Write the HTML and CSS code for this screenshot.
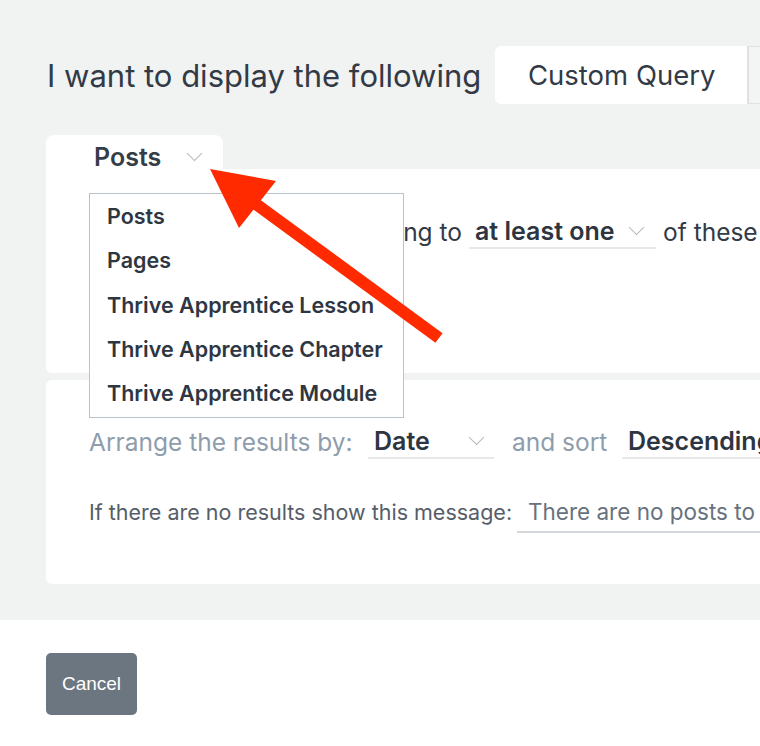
FILE: index.html
```html
<!DOCTYPE html>
<html lang="en">
<head>
  <meta charset="UTF-8">
  <title>Post List Settings</title>
  <link rel="stylesheet" href="styles.css">
</head>
<body>

  <div class="stage">
    <div class="head">
      <span class="head-title">I want to display the following</span>
      <div class="segmented">
        <span class="seg active">Custom Query</span>
        <span class="seg">Related Posts</span>
      </div>
    </div>

    <div class="tab">
      <span class="tab-label">Posts</span>
      <span class="chev"></span>
    </div>

    <div class="panel panel-query">
      <div class="row">
        <span class="txt lead">Show only the posts belonging to</span>
        <span class="select select-wide"><b>at least one</b><span class="chev"></span></span>
        <span class="txt">of these</span>
      </div>

      <ul class="dropdown">
        <li>Posts</li>
        <li>Pages</li>
        <li>Thrive Apprentice Lesson</li>
        <li>Thrive Apprentice Chapter</li>
        <li>Thrive Apprentice Module</li>
      </ul>
    </div>

    <div class="panel panel-order">
      <div class="row">
        <span class="txt muted arrange-label">Arrange the results by:</span>
        <span class="select select-date"><b>Date</b><span class="chev"></span></span>
        <span class="txt muted sort-label">and sort</span>
        <span class="select select-sort"><b>Descending</b></span>
      </div>
      <div class="row row-msg">
        <span class="msg-label">If there are no results show this message:</span>
        <span class="msg-input">There are no posts to display</span>
      </div>
    </div>
  </div>

  <div class="footer">
    <button class="btn-cancel">Cancel</button>
  </div>

  <svg class="pointer" width="760" height="746" viewBox="0 0 760 746">
    <line x1="439" y1="338" x2="245" y2="196" stroke="#ff2a00" stroke-width="12"/>
    <polygon points="210,169 276,181 239,228" fill="#ff2a00"/>
  </svg>

</body>
</html>
```

FILE: styles.css
```css
* {
  margin: 0;
  padding: 0;
  box-sizing: border-box;
}
body {
  font-family: Inter, "Open Sans", sans-serif;
  background-color: #fff;
  color: #323a45;
  width: 760px;
  height: 746px;
  overflow: hidden;
  position: relative;
}
.stage {
  background-color: #f1f2f2;
  height: 620px;
  padding: 46px 0 0 46px;
}
.head {
  display: flex;
  align-items: center;
  height: 58px;
}
.head-title {
  flex-shrink: 0;
  font-size: 31px;
  width: 449px;
  padding-left: 1px;
  white-space: nowrap;
}
.segmented {
  display: flex;
  flex-shrink: 0;
  height: 58px;
}
.seg {
  display: flex;
  align-items: center;
  padding: 0 40px;
  font-size: 27.5px;
  white-space: nowrap;
  background-color: #f3f4f4;
  border: 1px solid #dfe2e4;
  border-left: 2px solid #dfe2e4;
}
.seg.active {
  width: 252px;
  padding: 0 0 0 33px;
  background-color: #fff;
  border: none;
  border-radius: 6px 0 0 6px;
}
.tab {
  margin-top: 31px;
  width: 177px;
  height: 34px;
  background-color: #fff;
  border-radius: 8px 8px 0 0;
  display: flex;
  align-items: center;
  padding: 10px 0 0 48px;
}
.tab-label {
  font-size: 25px;
  font-weight: 600;
  color: #353d48;
}
.chev {
  display: inline-block;
  width: 11px;
  height: 11px;
  border-right: 1.5px solid #b4b9be;
  border-bottom: 1.5px solid #b4b9be;
  transform: rotate(45deg);
}
.tab .chev {
  margin: -8px 0 0 28px;
}
.panel {
  width: 760px;
  height: 204px;
  background-color: #fff;
  border-radius: 0 0 6px 6px;
  padding: 0 0 0 43px;
  position: relative;
}
.panel-query {
  z-index: 2;
}
.panel-order {
  margin-top: 7px;
  border-radius: 6px;
}
.row {
  display: flex;
  align-items: center;
  white-space: nowrap;
  font-size: 24.5px;
}
.row > * {
  flex-shrink: 0;
}
.panel-query .row {
  padding-top: 46px;
}
.panel-order .row {
  padding-top: 45px;
}
.panel-order .row-msg {
  padding-top: 32px;
}
.txt {
  color: #323a45;
}
.txt.muted {
  color: #8e9dac;
}
.lead {
  width: 373px;
  overflow: hidden;
  text-align: right;
  direction: rtl;
}
.select {
  display: flex;
  align-items: center;
  height: 34px;
  border-bottom: 2px solid #e6e8ea;
  padding: 0 0 0 6px;
  color: #2d3541;
  font-size: 25px;
}
.select b {
  font-weight: 600;
}
.select .chev {
  margin: -8px 0 0 0;
}
.select-wide {
  margin: 0 7px 0 7px;
  width: 187px;
  justify-content: space-between;
  padding-right: 14px;
}
.arrange-label {
  width: 279px;
}
.select-date {
  width: 126px;
  justify-content: space-between;
  padding-right: 12px;
}
.sort-label {
  margin-left: 18px;
  width: 110px;
}
.select-sort {
  width: 200px;
}
.msg-label {
  width: 428px;
  font-size: 21.5px;
  color: #555e68;
}
.msg-input {
  height: 42px;
  display: flex;
  align-items: center;
  padding-left: 11px;
  width: 300px;
  font-size: 22.5px;
  color: #67727e;
  border-bottom: 2px solid #d5d9dd;
}
.dropdown {
  list-style: none;
  position: absolute;
  top: 24px;
  left: 43px;
  width: 315px;
  height: 225px;
  background-color: #fff;
  border: 1px solid #b9c4ca;
  padding: 0 0 0 17px;
}
.dropdown li {
  height: 44.3px;
  line-height: 44px;
  font-size: 21.5px;
  font-weight: 600;
  color: #2e3642;
  white-space: nowrap;
}
.footer {
  padding: 33px 0 0 46px;
}
.btn-cancel {
  width: 91px;
  height: 62px;
  border: none;
  border-radius: 5px;
  background-color: #6b7680;
  color: #fff;
  font-family: "Liberation Sans", Arial, sans-serif;
  font-size: 19px;
}
.pointer {
  position: absolute;
  top: 0;
  left: 0;
  z-index: 5;
  pointer-events: none;
}
```
